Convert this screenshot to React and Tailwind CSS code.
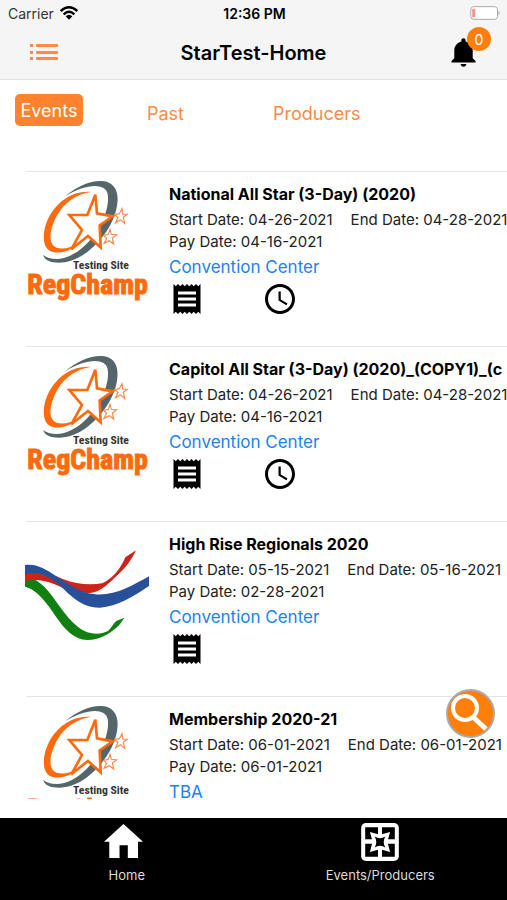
import React from "react";
import { MdReceipt, MdAccessTime } from "react-icons/md";
import { IoMdNotifications } from "react-icons/io";

const events = [
  {
    title: "National All Star (3-Day) (2020)",
    start: "04-26-2021",
    end: "04-28-2021",
    pay: "04-16-2021",
    venue: "Convention Center",
    logo: "champ",
    clock: true,
  },
  {
    title: "Capitol All Star (3-Day) (2020)_(COPY1)_(c",
    start: "04-26-2021",
    end: "04-28-2021",
    pay: "04-16-2021",
    venue: "Convention Center",
    logo: "champ",
    clock: true,
  },
  {
    title: "High Rise Regionals 2020",
    start: "05-15-2021",
    end: "05-16-2021",
    pay: "02-28-2021",
    venue: "Convention Center",
    logo: "ribbons",
    clock: false,
  },
  {
    title: "Membership 2020-21",
    start: "06-01-2021",
    end: "06-01-2021",
    pay: "06-01-2021",
    venue: "TBA",
    logo: "champ",
    clock: false,
  },
];

function ChampLogo() {
  return (
    <svg viewBox="75 60 372 378" className="h-[126px] w-[124px] shrink-0" role="img" aria-label="RegChamp Testing Site">
      <path
        fill="#54666a"
        d="M196 108C232 78 272 61 306 63C346 66 358 98 351 138C342 190 308 240 262 276C228 302 192 312 160 307C143 304 133 296 129 285C144 296 168 300 192 294C232 283 268 250 294 208C316 172 328 132 323 102C317 68 258 70 196 108Z"
      />
      <path
        fill="#fe6a0c"
        d="M272 96C222 92 178 120 152 162C134 192 127 226 134 252C144 288 198 286 240 248C206 268 172 272 158 254C144 234 154 196 172 164C194 126 232 102 272 96Z"
      />
      <path
        fill="#fff"
        stroke="#fe6a0c"
        strokeWidth="8"
        d="M286 104L291 160L338 169L299 196L302 262L264 228L214 268L246 210L208 165L262 165Z"
      />
      <g fill="#fff" stroke="#f98a4a" strokeWidth="3.5">
        <path d="M366 146L368 162L382 163L370 172L374 190L361 179L347 188L354 172L344 163L358 161Z" />
        <path d="M330 208L334 223L350 225L337 234L341 252L328 242L312 250L320 235L311 226L325 223Z" />
      </g>
      <text
        x="219"
        y="328"
        fontSize="35"
        fontWeight="700"
        fill="#333"
        fontFamily="'Roboto Condensed', 'Open Sans Condensed', Roboto, sans-serif"
      >
        Testing Site
      </text>
      <text
        x="82"
        y="403"
        fontSize="84"
        fontWeight="700"
        fill="#fe6a0c"
        stroke="#fe6a0c"
        strokeWidth="3"
        fontFamily="'Roboto Condensed', 'Open Sans Condensed', Roboto, sans-serif"
      >
        RegChamp
      </text>
    </svg>
  );
}

function RibbonLogo() {
  return (
    <svg viewBox="75 60 372 378" className="h-[126px] w-[124px] shrink-0" role="img" aria-label="High Rise Regionals">
      <path
        fill="#118011"
        d="M75 200C108 204 132 225 156 257C190 305 222 352 262 367C286 374 308 371 324 363C334 354 340 340 350 332L374 323C364 334 360 346 348 354C326 372 300 390 262 390C222 388 194 358 168 320C144 284 112 238 75 230Z"
      />
      <path
        fill="#cc2418"
        d="M75 184C118 180 152 192 186 206C226 222 268 226 306 220C336 208 362 176 376 142L408 121C396 148 376 174 356 192C330 216 304 246 270 249C230 250 196 238 162 222C134 210 104 208 75 212Z"
      />
      <path
        fill="#28509a"
        d="M75 165C108 160 136 176 168 198C204 222 240 248 286 253C346 258 398 226 447 199L447 228C402 258 352 290 300 293C254 294 222 268 194 240C162 208 124 180 75 192Z"
      />
    </svg>
  );
}

function EventRow({ event }) {
  return (
    <li className="ml-[26px] flex h-[175px] gap-5 border-t border-[#e6e6e6]">
      <div className="-ml-px shrink-0 pt-2">{event.logo === "champ" ? <ChampLogo /> : <RibbonLogo />}</div>
      <div className="min-w-0 flex-1 overflow-hidden whitespace-nowrap pt-[10px]">
        <h2 className="mb-[3px] text-[16px] leading-6 font-bold text-black">{event.title}</h2>
        <p className="flex gap-[18px] text-[15px] leading-[22px] text-[#222]">
          <span>Start Date: {event.start}</span>
          <span>End Date: {event.end}</span>
        </p>
        <p className="text-[15px] leading-[22px] text-[#222]">Pay Date: {event.pay}</p>
        <a href="#venue" className="block text-[17px] leading-7 text-[#1a83f0]">
          {event.venue}
        </a>
        <div className="flex gap-[57px]">
          <button type="button" aria-label="Receipt">
            <MdReceipt size={36} />
          </button>
          {event.clock && (
            <button type="button" aria-label="Schedule">
              <MdAccessTime size={36} />
            </button>
          )}
        </div>
      </div>
    </li>
  );
}

export default function App() {
  return (
    <div className="relative flex h-screen flex-col overflow-hidden bg-white font-['Inter','Liberation_Sans',sans-serif] text-black">
      <header className="border-b border-[#dedede] bg-[#f6f5f6]">
        <div className="grid h-[26px] grid-cols-3 items-center pr-[6px] pl-2">
          <span className="flex items-center gap-[6px] text-[14px] text-[#333]">
            Carrier
            <svg viewBox="0 0 54 42" className="h-[14px] w-[18px]" fill="none" stroke="#000" strokeWidth="7">
              <path d="M2 15Q27 -7 52 15" />
              <path d="M11 25Q27 10 43 25" />
              <path d="M27 41L17 31Q27 22 37 31Z" fill="#000" stroke="none" />
            </svg>
          </span>
          <span className="text-center text-[14px] font-semibold">12:36 PM</span>
          <svg viewBox="0 0 92 42" className="h-[14px] w-[31px] justify-self-end" fill="none">
            <rect x="2" y="2" width="80" height="38" rx="9" fill="#fff" stroke="#a9a9a9" strokeWidth="3" />
            <rect x="6" y="8" width="9" height="26" rx="3" fill="#f7928f" />
            <path d="M85 14Q92 21 85 28Z" fill="#a9a9a9" />
          </svg>
        </div>
        <div className="grid h-[53px] grid-cols-[1fr_auto_1fr] items-center px-[26px]">
          <button type="button" aria-label="Menu" className="justify-self-start pl-1">
            <svg viewBox="0 0 28 17" className="h-[17px] w-7" fill="#fd8a45">
              <rect x="0" y="0" width="3" height="3" />
              <rect x="6" y="0" width="22" height="3" rx="1" />
              <rect x="0" y="7" width="3" height="3" />
              <rect x="6" y="7" width="22" height="3" rx="1" />
              <rect x="0" y="13" width="3" height="3" />
              <rect x="6" y="13" width="22" height="3" rx="1" />
            </svg>
          </button>
          <h1 className="text-[20px] font-semibold">StarTest-Home</h1>
          <button type="button" aria-label="Notifications" className="relative justify-self-end">
            <IoMdNotifications size={35} />
            <span className="absolute -top-2 -right-[10px] flex size-6 items-center justify-center rounded-full bg-[#ff7f09] text-[14px] text-white">
              0
            </span>
          </button>
        </div>
      </header>

      <nav className="flex h-[91px] items-start pt-[14px] pl-[15px] text-[18px] text-[#fd8a45]">
        <button type="button" className="h-8 w-[68px] rounded-[5px] bg-[#ff832f] text-white">
          Events
        </button>
        <button type="button" className="ml-16 pt-[6px]">
          Past
        </button>
        <button type="button" className="ml-[89px] pt-[6px]">
          Producers
        </button>
      </nav>

      <ul className="mb-[19px] min-h-0 flex-1 overflow-hidden">
        {events.map((event) => (
          <EventRow key={event.title} event={event} />
        ))}
      </ul>

      <button
        type="button"
        aria-label="Search"
        className="absolute right-3 bottom-[162px] size-[49px] overflow-hidden rounded-full border-2 border-[#aaa] bg-[#ff7f09]"
      >
        <svg viewBox="0 0 45 45" className="size-full" fill="none" stroke="#fff">
          <circle cx="17" cy="17" r="12" strokeWidth="4" />
          <path d="M26 27L38 38" strokeWidth="5" />
        </svg>
      </button>

      <footer className="grid h-[82px] shrink-0 grid-cols-2 bg-black text-[13px] text-[#ddd]">
        <button type="button" className="flex flex-col items-center pt-[5px]">
          <svg viewBox="0 0 118 113" className="mr-[6px] h-[38px] w-[39px]" fill="#fff">
            <path d="M0 56L59 2L118 56H103V105H72V66H47V105H16V56Z" />
          </svg>
          <span className="mt-1 leading-5">Home</span>
        </button>
        <button type="button" className="flex flex-col items-center pt-[5px]">
          <svg viewBox="0 0 112 113" className="size-[38px]">
            <rect width="112" height="113" rx="14" fill="#fff" />
            <path fill="#000" d="M12 13H50V48H12ZM62 13H100V48H62ZM12 62H50V100H12ZM62 62H100V100H62Z" />
            <path fill="#fff" d="M26 27L56 35L86 27L78 56L86 86L56 78L26 86L34 56Z" />
            <path fill="#000" d="M40 40Q56 50 72 40Q62 56 72 73Q56 63 40 73Q50 56 40 40Z" />
          </svg>
          <span className="mt-1 leading-5">Events/Producers</span>
        </button>
      </footer>
    </div>
  );
}
